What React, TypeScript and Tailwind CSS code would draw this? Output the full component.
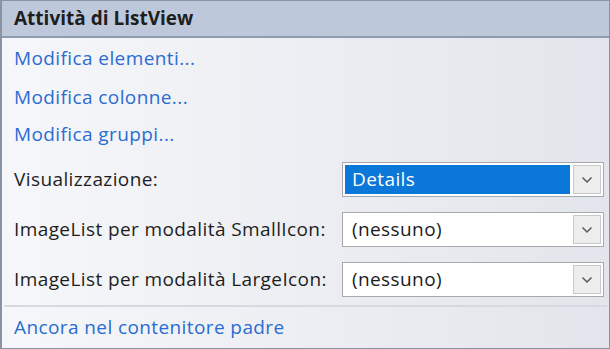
import React from "react";

const font = { fontFamily: '"Segoe UI", "Open Sans", "Noto Sans", sans-serif' };

function Chevron() {
  return (
    <svg width="12" height="8" viewBox="0 0 12 8" fill="none">
      <path d="M1.5 1.5 L6 6 L10.5 1.5" stroke="#5a5a5a" strokeWidth="1.5" />
    </svg>
  );
}

function Combo({ value, selected }: { value: string; selected?: boolean }) {
  return (
    <div className="w-[262px] h-[35px] border border-[#a7a9ac] bg-white flex items-stretch p-[2px] gap-[3px]">
      <div
        className={
          "flex-1 flex items-center pl-[7px] text-[19px] tracking-[0.4px] " +
          (selected ? "bg-[#0b77d8] text-white" : "text-[#1b1b1b]")
        }
      >
        {value}
      </div>
      <div className="w-[28px] border border-[#c9c9c9] bg-[#ededed] flex items-center justify-center">
        <Chevron />
      </div>
    </div>
  );
}

export default function App() {
  const links = [
    { label: "Modifica elementi...", h: "h-[40px]" },
    { label: "Modifica colonne...", h: "h-[38px]" },
    { label: "Modifica gruppi...", h: "h-[36px]" },
  ];
  const rows = [
    { label: "Visualizzazione:", value: "Details", selected: true },
    { label: "ImageList per modalità SmallIcon:", value: "(nessuno)" },
    { label: "ImageList per modalità LargeIcon:", value: "(nessuno)" },
  ];

  return (
    <div
      className="w-[610px] h-[349px] border border-l-2 border-[#8893a4] flex flex-col overflow-hidden tracking-[0.4px]"
      style={font}
    >
      {/* header */}
      <div className="h-[37px] shrink-0 bg-[#bdc9db] border-b-2 border-[#8e9bb0] flex items-center px-[12px] text-[19px] font-bold tracking-normal text-[#1e1e1e]">
        Attività di ListView
      </div>

      {/* body */}
      <div className="flex-1 flex flex-col bg-gradient-to-r from-[#f6f7fa] to-[#e2e5eb]">
        {links.map((l) => (
          <div key={l.label} className={l.h + " flex items-center px-[12px] text-[19px] text-[#2b6cd1]"}>
            {l.label}
          </div>
        ))}

        <div className="mt-[10px] flex flex-col gap-[15px] pr-[5px]">
          {rows.map((r) => (
            <div key={r.label} className="flex items-center justify-between pl-[12px]">
              <span className="text-[19px] text-[#1e1e1e]">{r.label}</span>
              <Combo value={r.value} selected={r.selected} />
            </div>
          ))}
        </div>

        <div className="mt-[8px] mx-[2px] border-t-2 border-[#d6d9df]" />

        <div className="h-[40px] flex items-center px-[12px] text-[19px] text-[#2b6cd1]">
          Ancora nel contenitore padre
        </div>
      </div>
    </div>
  );
}
